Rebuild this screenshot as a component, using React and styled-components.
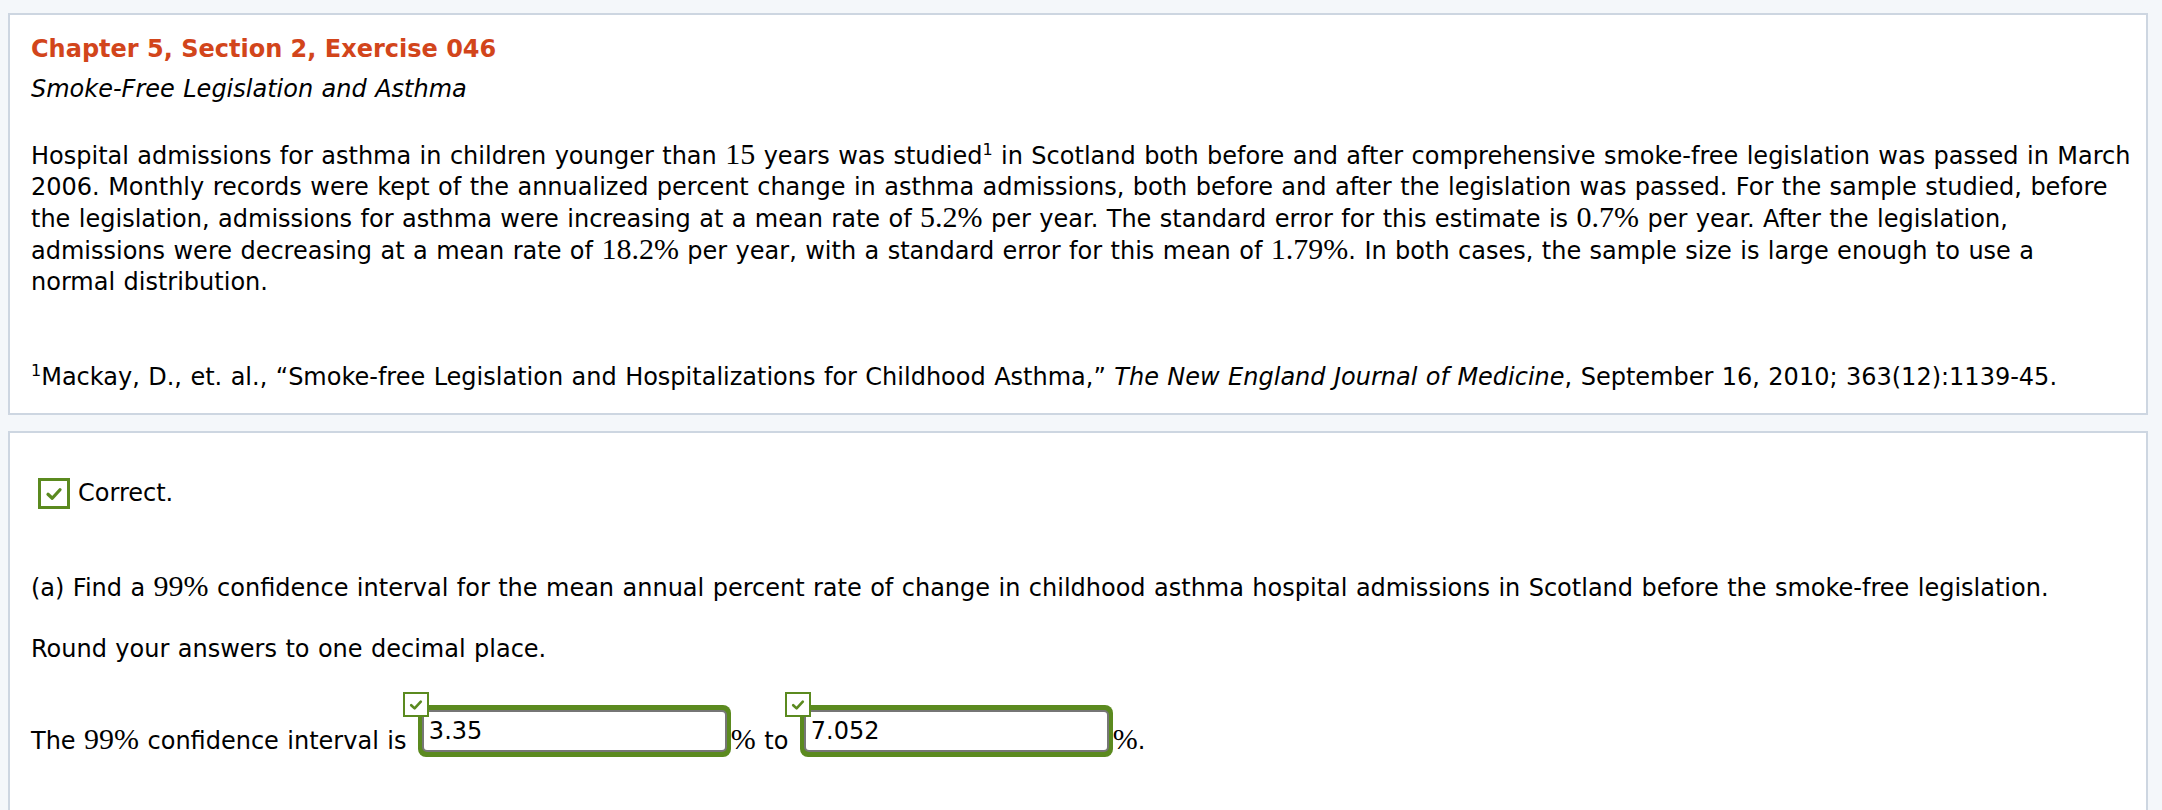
import React from 'react'
import styled, { createGlobalStyle } from 'styled-components'

const GREEN = '#5b8a1f'
const ORANGE = '#d2451b'
const CARD_BORDER = '#cdd6e1'

const GlobalStyle = createGlobalStyle`
    html, body {
        margin: 0;
        padding: 0;
        background: #f4f7fa;
        overflow: hidden;
    }
    body {
        font-family: "DejaVu Sans", Verdana, sans-serif;
        color: #000;
    }
`

const Page = styled.div`
    height: 810px;
    padding: 13px 14px 0 8px;
    display: flex;
    flex-direction: column;
    gap: 16px;
    box-sizing: border-box;
`

const Card = styled.section`
    background: #fff;
    border: 2px solid ${CARD_BORDER};
    padding: 20px 8px ${({tall}) => (tall ? '0' : '20px')} 21px;
    font-size: 24px;
    line-height: 31px;
    word-spacing: 0.8px;
    flex: ${({tall}) => (tall ? '1 0 auto' : '0 0 auto')};
    min-height: ${({tall}) => (tall ? '420px' : '0')};
`

const Heading = styled.h2`
    margin: 0 0 11px;
    font-size: 24px;
    line-height: 29px;
    font-weight: 700;
    color: ${ORANGE};
    word-spacing: 0;
`

const Subtitle = styled.div`
    font-style: italic;
    line-height: 29px;
`

const Paragraph = styled.p`
    margin: ${({top}) => top}px 0 0;
`

const Math = styled.span`
    font-family: "Liberation Serif", "Times New Roman", serif;
    font-size: 30px;
    line-height: 27px;
    word-spacing: 0;
`

const Sup = styled.sup`
    font-size: 16px;
    line-height: 16px;
    vertical-align: 9px;
`

const ResultRow = styled.div`
    display: flex;
    align-items: center;
    gap: 8px;
    margin: 25px 0 0 7px;
`

const CheckBox = styled.span`
    display: inline-flex;
    align-items: center;
    justify-content: center;
    width: ${({size}) => size}px;
    height: ${({size}) => size - 1}px;
    border: ${({thick}) => thick}px solid ${GREEN};
    background: #fff;
    box-sizing: border-box;
`

const Badge = styled(CheckBox)`
    position: absolute;
    left: -15px;
    top: -13px;
    z-index: 2;
`

const AnswerLine = styled.div`
    margin-top: ${({top}) => top}px;
    white-space: nowrap;
`

const InputWrap = styled.span`
    position: relative;
    display: inline-block;
    vertical-align: bottom;
    width: 313px;
    height: 52px;
    margin-left: 3px;
    padding: 5px 4px 5px;
    background: ${GREEN};
    border-radius: 8px;
    box-sizing: border-box;
`

const Field = styled.input`
    display: block;
    width: 100%;
    height: 100%;
    margin: 0;
    padding: 0 5px;
    border: 2px solid #767676;
    border-radius: 5px;
    background: #fff;
    box-sizing: border-box;
    font: 24px "DejaVu Sans", Verdana, sans-serif;
    color: #000;
    outline: none;
`

const Check = ({size}) => (
    <svg width={size} height={size} viewBox="0 0 16 16">
        <path d="M3.2 8.2 L6.6 11.4 L12.8 4.6" fill="none" stroke={GREEN} strokeWidth="2.6" strokeLinecap="round" strokeLinejoin="round"/>
    </svg>
)

const Answer = ({value}) => (
    <InputWrap>
        <Badge size={26} thick={2}><Check size={16}/></Badge>
        <Field readOnly value={value}/>
    </InputWrap>
)

const App = () => {
    return (
        <>
            <GlobalStyle/>
            <Page>
                <Card>
                    <Heading>Chapter 5, Section 2, Exercise 046</Heading>
                    <Subtitle>Smoke-Free Legislation and Asthma</Subtitle>
                    <Paragraph top={36}>
                        Hospital admissions for asthma in children younger than <Math>15</Math> years was studied<Sup>1</Sup> in Scotland both before and after comprehensive smoke-free legislation was passed in March<br/>
                        2006. Monthly records were kept of the annualized percent change in asthma admissions, both before and after the legislation was passed. For the sample studied, before<br/>
                        the legislation, admissions for asthma were increasing at a mean rate of <Math>5.2%</Math> per year. The standard error for this estimate is <Math>0.7%</Math> per year. After the legislation,<br/>
                        admissions were decreasing at a mean rate of <Math>18.2%</Math> per year, with a standard error for this mean of <Math>1.79%</Math>. In both cases, the sample size is large enough to use a<br/>
                        normal distribution.
                    </Paragraph>
                    <Paragraph top={64}>
                        <Sup>1</Sup>Mackay, D., et. al., “Smoke-free Legislation and Hospitalizations for Childhood Asthma,” <i>The New England Journal of Medicine</i>, September 16, 2010; 363(12):1139-45.
                    </Paragraph>
                </Card>
                <Card tall>
                    <ResultRow>
                        <CheckBox size={32} thick={3}><Check size={20}/></CheckBox>
                        Correct.
                    </ResultRow>
                    <Paragraph top={63}>
                        (a) Find a <Math>99%</Math> confidence interval for the mean annual percent rate of change in childhood asthma hospital admissions in Scotland before the smoke-free legislation.
                    </Paragraph>
                    <Paragraph top={30}>Round your answers to one decimal place.</Paragraph>
                    <AnswerLine top={40}>
                        The <Math>99%</Math> confidence interval is <Answer value="3.35"/><Math>%</Math> to <Answer value="7.052"/><Math>%</Math>.
                    </AnswerLine>
                </Card>
            </Page>
        </>
    )
}

export default App
